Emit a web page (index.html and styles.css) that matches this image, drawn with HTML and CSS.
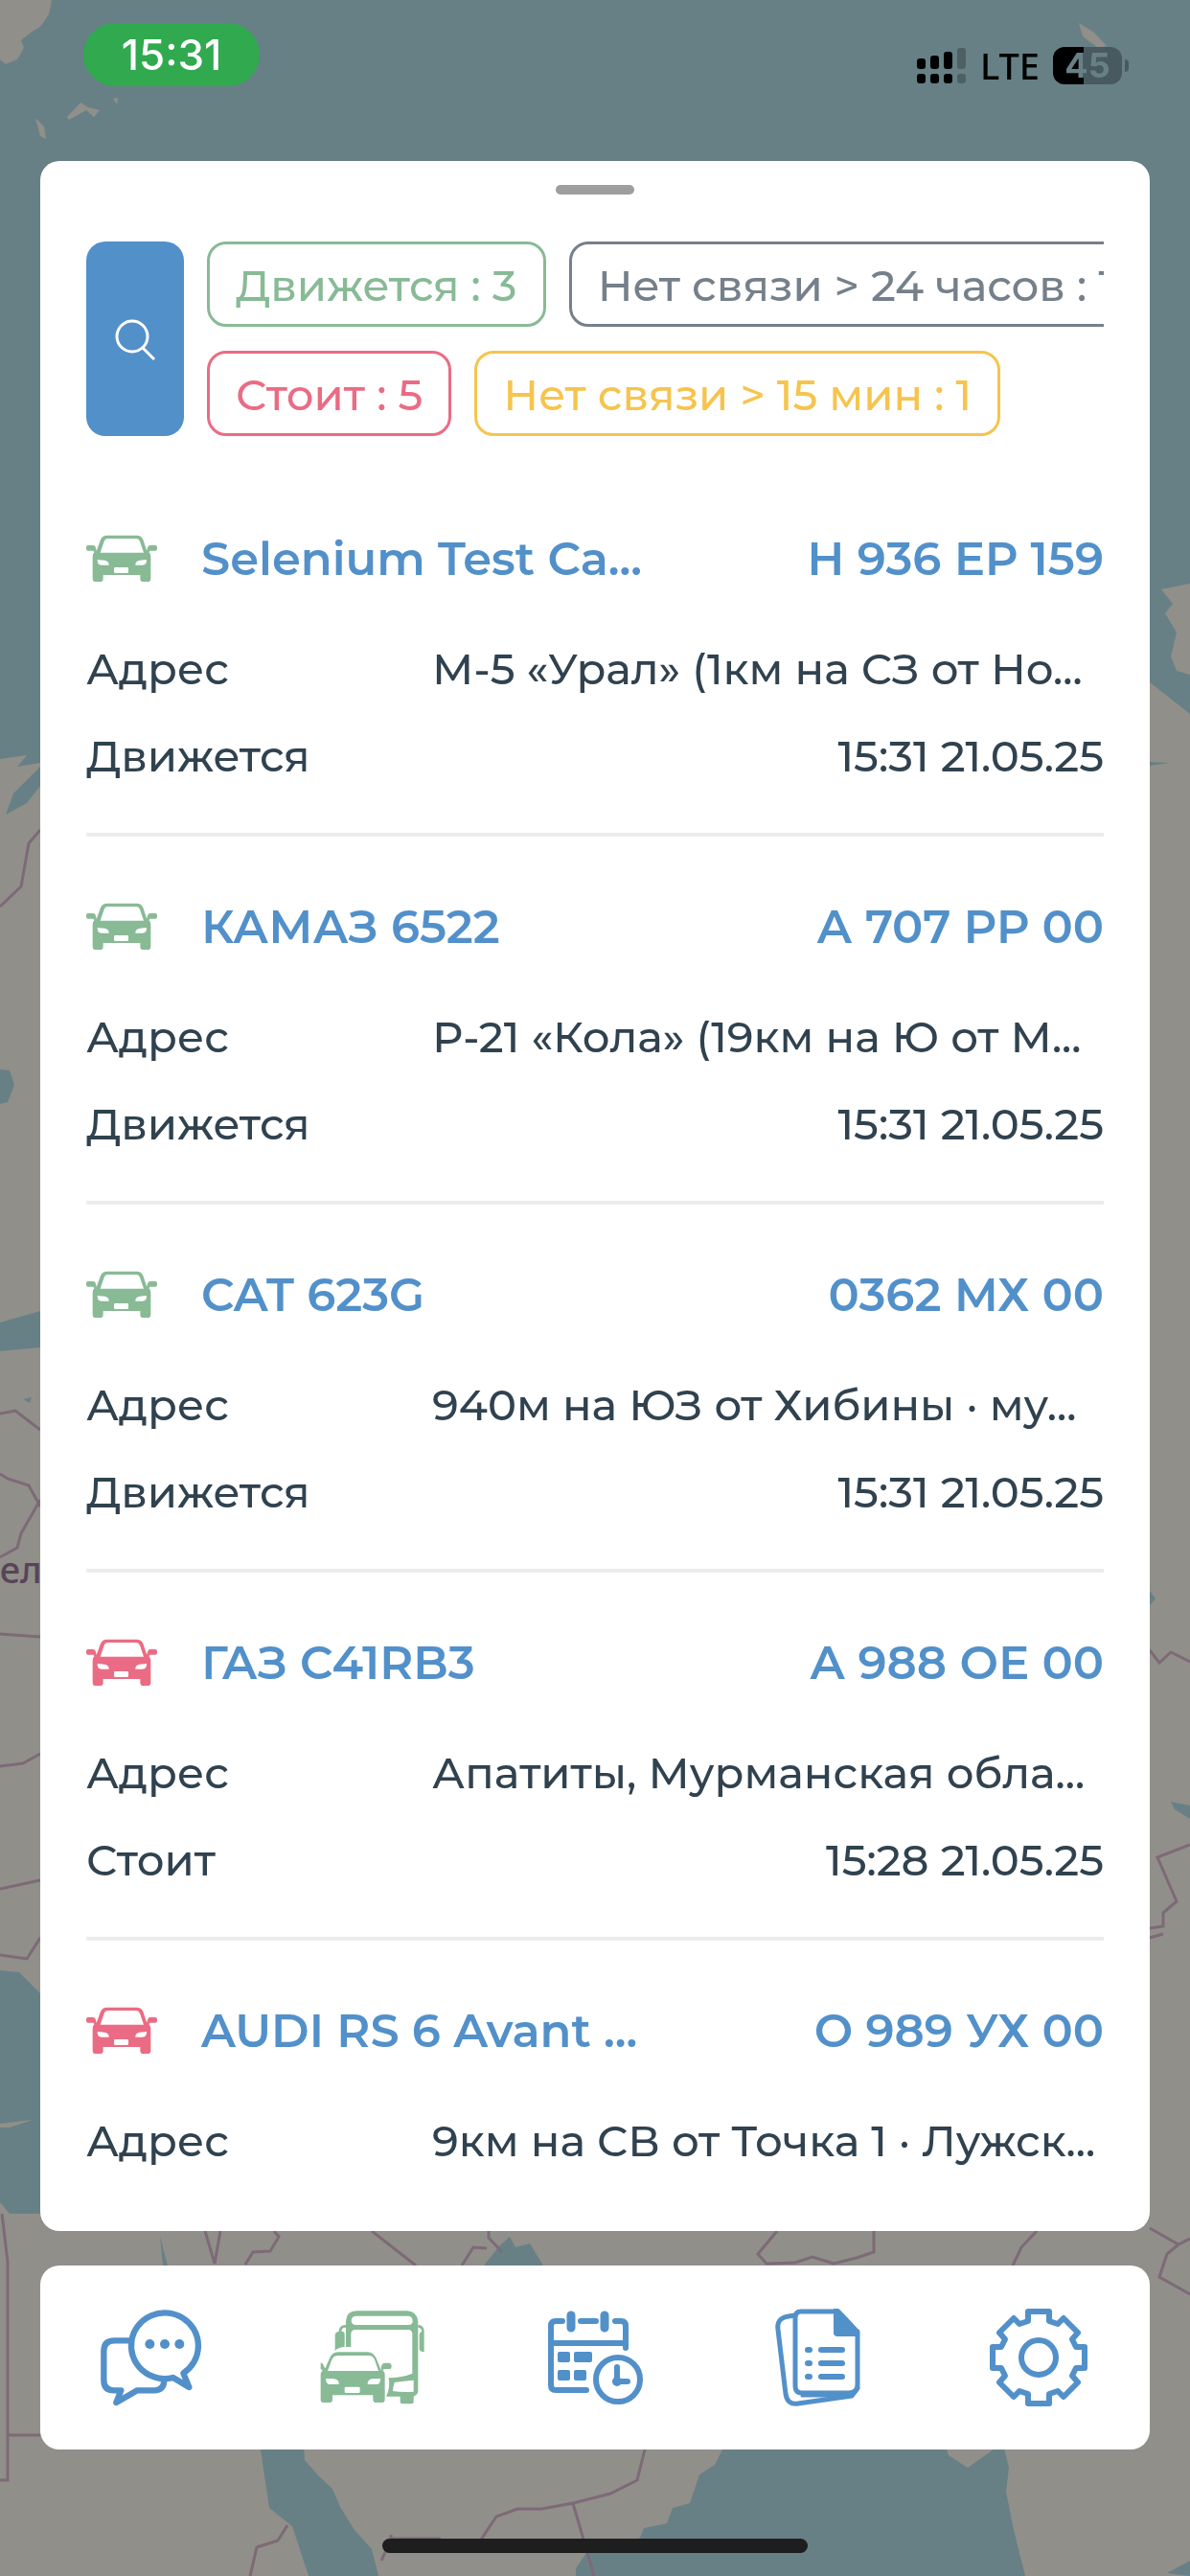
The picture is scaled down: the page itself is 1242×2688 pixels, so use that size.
FILE: index.html
```
<!DOCTYPE html>
<html lang="ru">
<head>
  <meta charset="UTF-8" />
  <meta name="viewport" content="width=device-width, initial-scale=1" />
  <title>Объекты</title>
  <link rel="stylesheet" href="styles.css">
</head>
<body>
  <!-- map under the sheet -->
  <svg class="map" viewBox="0 0 1242 2688" preserveAspectRatio="xMidYMid slice" aria-hidden="true">
    <rect width="1242" height="2688" fill="#678086"/>
    <g fill="#918f8a">
      <path d="M0 0H54L51 15L42 28L32 34L22 42L25 50L18 62L6 67L0 62Z"/>
      <path d="M70 122L84 107L92 112L104 115L98 122L90 115L72 125ZM37 123L46 132L48 145L42 142ZM118 103L123 102L122 109Z"/>
      <path d="M1126 24L1142 34L1155 48L1146 50L1130 38Z"/>
      <path d="M0 792L28 788L18 800L42 796V2080L20 2058L0 2056ZM0 2216L34 2212L10 2220L0 2220ZM0 2298L10 2310L42 2310L1200 2300V712L1242 745V2688H0Z"/>
      <path d="M1212 615L1242 609V704L1228 700L1222 685L1228 660L1216 640L1224 630Z"/>
    </g>
    <g fill="#678086">
      <path d="M6 850L14 828L42 800V820L28 838ZM0 1116L10 1117L15 1132L8 1150L0 1152ZM0 1380L42 1368V1406L0 1410ZM24 1460L33 1458L31 1464Z"/>
      <path d="M505 2364L520 2345L532 2334L538 2345L553 2341L567 2364ZM167 2334L175 2364L170 2364Z"/>
      <path d="M271 2550H317L318 2567L332 2583L347 2597L355 2616L370 2640L388 2660L395 2688H322L305 2636L281 2617Z"/>
      <path d="M757 2550L746 2572L730 2582L724 2600L720 2612L702 2617L696 2633L672 2638L668 2648L640 2662L612 2664L601 2680V2688H1070L1058 2640L1050 2600L1053 2575L1047 2550L1038 2555L1010 2575L990 2562L986 2550Z"/>
      <path d="M1200 795L1220 796L1200 799ZM1212 1193L1232 1193ZM1204 1572L1213 1570ZM1200 1660L1206 1668L1200 1675ZM1222 1880L1242 1884V1898L1226 1888ZM1218 2685L1242 2672V2688Z"/>
    </g>
    <g fill="none" stroke="#7d6a77" stroke-width="3">
      <path d="M0 946L22 925L30 880L42 866M0 1475L16 1472L42 1492M0 1538L8 1543L30 1550L42 1572M42 1565L22 1600L18 1615L0 1625M0 1705L42 1708M0 1843L24 1840L42 1830M0 1971L42 1962M0 2040L28 2044L42 2022M2 2310L8 2360L8 2588H0M8 2541H42"/>
      <path d="M214 2328L224 2362L230 2328M286 2328L291 2334L282 2349L264 2350L256 2363M388 2328L434 2364M510 2328V2335L524 2350M482 2364L494 2345L508 2346M811 2328L791 2352L800 2362L830 2361L848 2355L870 2362L894 2356L912 2350V2328M1082 2328L1066 2345L1057 2364"/>
      <path d="M673 2556L665 2588L637 2602L598 2612L565 2618L540 2618L518 2626L502 2650M598 2612L620 2688M300 2635L290 2651L268 2658L261 2688M408 2645V2649H460M408 2650L398 2672"/>
      <path d="M1200 1722L1210 1735L1222 1724L1242 1734M1242 1925L1208 1938L1228 1984L1214 1996V2010L1200 2012M1200 2022L1214 2018M1200 2325L1230 2342L1242 2336M1230 2342L1218 2352L1210 2376L1242 2394"/>
    </g>
    <text class="map-label" x="-24" y="1652">Бел</text>
  </svg>

  <div class="app">
    <header class="status-bar">
      <time class="clock">15:31</time>
      <div class="status-icons">
        <svg class="signal" viewBox="0 0 52 38" aria-hidden="true">
          <rect x="0" y="12" width="9" height="11" rx="3"/>
          <rect x="14" y="9" width="9" height="14" rx="3"/>
          <rect x="28" y="5" width="9" height="18" rx="3"/>
          <rect x="42" y="1" width="9" height="22" rx="3" opacity=".25"/>
          <rect x="0" y="28" width="9" height="10" rx="3"/>
          <rect x="14" y="28" width="9" height="10" rx="3"/>
          <rect x="28" y="28" width="9" height="10" rx="3"/>
          <rect x="42" y="28" width="9" height="10" rx="3" opacity=".25"/>
        </svg>
        <span class="network">LTE</span>
        <span class="battery">45</span>
      </div>
    </header>

    <main class="sheet">
      <div class="handle"></div>

      <div class="filters">
        <button class="search" type="button" aria-label="Поиск">
          <svg viewBox="0 0 46 46" aria-hidden="true"><circle cx="20" cy="20" r="16"/><path d="M31 32L43 44"/></svg>
        </button>
        <div class="chips">
          <div class="chip-row">
            <button class="chip green" type="button">Движется : 3</button>
            <button class="chip gray" type="button">Нет связи &gt; 24 часов : 1</button>
          </div>
          <div class="chip-row">
            <button class="chip red" type="button">Стоит : 5</button>
            <button class="chip yellow" type="button">Нет связи &gt; 15 мин : 1</button>
          </div>
        </div>
      </div>

      <svg class="sprite" aria-hidden="true">
        <symbol id="car" viewBox="30 57 222 150">
          <path fill="currentColor" fill-rule="evenodd" d="M62 108L75 72Q80 59 96 59H187Q203 59 208 72L220 108Q232 113 232 125V194Q232 204 222 204H209Q199 204 199 194V183H83V194Q83 204 73 204H60Q50 204 50 194V125Q50 113 62 108ZM74 113H210L198 78Q195 69 186 69H98Q89 69 86 78ZM65 135Q64 152 78 152H101Q102 140 88 137ZM219 135Q220 152 206 152H184Q183 140 197 137ZM121 159Q117 159 117 163V173Q117 177 121 177H158Q162 177 162 173V163Q162 159 158 159Z"/>
          <path fill="currentColor" d="M36 90H52Q59 90 60 98L63 111L56 114L53 107H36Q30 107 30 101V96Q30 90 36 90ZM246 90H230Q223 90 222 98L218 111L225 114L229 107H246Q252 107 252 101V96Q252 90 246 90Z"/>
        </symbol>
      </svg>

      <ul class="vehicles">
        <li class="vehicle">
          <div class="vehicle-head">
            <svg class="car moving"><use href="#car"/></svg>
            <a class="name" href="#">Selenium Test Ca...</a>
            <span class="plate">Н 936 ЕР 159</span>
          </div>
          <dl>
            <dt>Адрес</dt><dd>М-5 «Урал» (1км на СЗ от Но...</dd>
            <dt>Движется</dt><dd class="time">15:31 21.05.25</dd>
          </dl>
        </li>
        <li class="vehicle">
          <div class="vehicle-head">
            <svg class="car moving"><use href="#car"/></svg>
            <a class="name" href="#">КАМАЗ 6522</a>
            <span class="plate">А 707 РР 00</span>
          </div>
          <dl>
            <dt>Адрес</dt><dd>Р-21 «Кола» (19км на Ю от М...</dd>
            <dt>Движется</dt><dd class="time">15:31 21.05.25</dd>
          </dl>
        </li>
        <li class="vehicle">
          <div class="vehicle-head">
            <svg class="car moving"><use href="#car"/></svg>
            <a class="name" href="#">CAT 623G</a>
            <span class="plate">0362 МХ 00</span>
          </div>
          <dl>
            <dt>Адрес</dt><dd>940м на ЮЗ от Хибины · му...</dd>
            <dt>Движется</dt><dd class="time">15:31 21.05.25</dd>
          </dl>
        </li>
        <li class="vehicle">
          <div class="vehicle-head">
            <svg class="car stopped"><use href="#car"/></svg>
            <a class="name" href="#">ГАЗ C41RB3</a>
            <span class="plate">А 988 ОЕ 00</span>
          </div>
          <dl>
            <dt>Адрес</dt><dd>Апатиты, Мурманская обла...</dd>
            <dt>Стоит</dt><dd class="time">15:28 21.05.25</dd>
          </dl>
        </li>
        <li class="vehicle">
          <div class="vehicle-head">
            <svg class="car stopped"><use href="#car"/></svg>
            <a class="name" href="#">AUDI RS 6 Avant ...</a>
            <span class="plate">О 989 УХ 00</span>
          </div>
          <dl>
            <dt>Адрес</dt><dd>9км на СВ от Точка 1 · Лужск...</dd>
          </dl>
        </li>
      </ul>
    </main>

    <nav class="tabs">
      <a class="tab" href="#" aria-label="Сообщения">
        <svg viewBox="98 75 330 330" fill="none" stroke="currentColor" stroke-width="19" stroke-linejoin="round" stroke-linecap="round">
          <path d="M200 187H147Q114 187 114 220V311Q114 343 147 343H168L153 381L219 343H272Q302 343 303 312" stroke-linecap="butt"/>
          <path d="M331 303A105 103 0 1 1 363 289L381 333Z"/>
          <g fill="currentColor" stroke="none"><circle cx="258" cy="198" r="15"/><circle cx="305" cy="198" r="15"/><circle cx="351" cy="198" r="15"/></g>
        </svg>
      </a>
      <a class="tab active" href="#" aria-label="Объекты" aria-current="page">
        <svg viewBox="793 75 330 330">
          <path fill="currentColor" fill-rule="evenodd" d="M874 207V126Q876 94 908 94H1066Q1098 96 1100 128V346Q1099 357 1086 362V379Q1086 385 1080 385H1050Q1044 385 1044 379V362H1000Q1014 336 1008 304Q1050 303 1082 290V165Q1080 153 1069 153H903Q891 154 890 165V207ZM904 138H1071Q1083 137 1083 125Q1082 110 1068 110H905Q891 111 891 125Q892 137 904 138ZM1026 318Q1022 330 1021 345Q1050 350 1086 347V311Q1055 313 1026 318Z"/>
          <path fill="currentColor" d="M852 158Q853 137 874 138V146Q861 145 860 158Q870 158 870 166V207Q850 208 840 219V170Q841 160 852 158ZM1100 138Q1117 138 1119 155V222Q1104 222 1104 212V168Q1105 160 1112 158Q1111 147 1100 146Z"/>
          <path fill="currentColor" fill-rule="evenodd" d="M807 280L823 242Q832 223 850 223H942Q960 224 969 242L984 280Q996 282 996 293V371Q996 381 986 381H969Q959 381 959 371V358H832V371Q832 381 822 381H805Q795 381 795 371V293Q795 283 807 280ZM817 282H976L964 247Q959 234 944 234H850Q835 234 830 247ZM811 306Q812 324 824 324H852Q854 311 838 307ZM982 306Q982 324 970 324H942Q941 311 955 307ZM874 332Q870 332 870 336V347Q870 351 874 351H914Q918 351 918 347V336Q918 332 914 332Z"/>
          <path fill="currentColor" d="M984 277Q984 258 996 257H1010Q1017 258 1017 266Q1017 276 1010 276H992L990 285ZM795 256Q804 259 806 269L812 276L805 285L795 275Z"/>
        </svg>
      </a>
      <a class="tab" href="#" aria-label="Календарь">
        <svg viewBox="0 0 110 110" fill="none" stroke="currentColor" stroke-width="6" stroke-linecap="round">
          <path d="M21 17H14Q9 17 9 22V84Q9 89 14 89H46M76 17H82Q87 17 87 22V45M40 17H56M9 40H87"/>
          <path d="M30 11V24M65 11V24" stroke-width="9"/>
          <g fill="currentColor" stroke="none"><rect x="16" y="49" width="13" height="11" rx="2"/><rect x="33" y="49" width="19" height="11" rx="2"/><rect x="16" y="68" width="13" height="11" rx="2"/><rect x="33" y="68" width="13" height="11" rx="2"/></g>
          <circle cx="79" cy="78" r="28" fill="#fff" stroke="none"/>
          <circle cx="79" cy="78" r="23"/>
          <path d="M78 65V80H89"/><circle cx="78" cy="80" r="2"/>
        </svg>
      </a>
      <a class="tab" href="#" aria-label="Отчёты">
        <svg viewBox="0 0 110 110" fill="none" stroke="currentColor" stroke-width="5" stroke-linejoin="round" stroke-linecap="round">
          <path d="M32 11L25 12Q12 14 14 26L22 93Q24 105 35 103L91 95L97 87"/>
          <path d="M75 7H38Q32 7 32 13V85Q32 92 39 92H88Q97 92 97 83V28"/>
          <path d="M39 95H90" stroke-width="3"/>
          <path fill="currentColor" stroke="none" d="M72 4H77Q79 5 99 27V33H76Q72 33 72 29Z"/>
          <path d="M45 47H47M45 61H47M45 75H47M59 47H81M59 61H81M59 75H81" stroke-width="6"/>
        </svg>
      </a>
      <a class="tab" href="#" aria-label="Настройки">
        <svg viewBox="0 0 110 110" fill="none" stroke="currentColor" stroke-width="6" stroke-linejoin="round">
          <path d="M44 7H66V17L75 20L81 14L96 29L90 36L94 44H103V66H94L90 74L96 81L81 96L75 90L66 93V103H44V93L35 90L29 96L14 81L20 74L16 66H7V44H16L20 36L14 29L29 14L35 20L44 17Z"/>
          <circle cx="55" cy="55" r="18"/>
        </svg>
      </a>
    </nav>

    <div class="home-indicator"></div>
  </div>
</body>
</html>
```
FILE: styles.css
```
* {
  box-sizing: border-box;
}

body {
  margin: 0;
  font-family: Montserrat, Inter, "Noto Sans", sans-serif;
  background-color: #918f8a;
  color: #30424f;
}

.map {
  position: fixed;
  top: 0;
  left: 0;
  width: 100%;
  height: 100%;
}

.map-label {
  font: 500 38px "Noto Sans", sans-serif;
  fill: #574557;
}

.app {
  position: relative;
  display: flex;
  flex-direction: column;
  height: 100vh;
  padding: 0 42px 24px;
}

/* status bar */
.status-bar {
  display: flex;
  justify-content: space-between;
  flex: none;
  height: 168px;
  padding: 24px 24px 0 45px;
}

.clock {
  width: 184px;
  height: 66px;
  border-radius: 33px;
  background-color: #30a94f;
  color: #fff;
  font: 500 44px/66px Inter, sans-serif;
  text-align: center;
}

.status-icons {
  display: flex;
  align-items: center;
  gap: 14px;
  height: 88px;
  color: #000;
}

.signal {
  width: 52px;
  height: 38px;
}

.network {
  font: 500 38px/40px "Noto Sans", sans-serif;
}

.battery {
  position: relative;
  width: 72px;
  height: 39px;
  margin-right: 5px;
  border-radius: 12px;
  background: linear-gradient(to right, #000 44%, #485a5f 44%);
  color: #678086;
  font: 700 36px/39px Inter, sans-serif;
  text-align: center;
}

.battery::after {
  content: "";
  position: absolute;
  top: 13px;
  right: -7px;
  width: 4px;
  height: 13px;
  border-radius: 0 4px 4px 0;
  background-color: #485a5f;
}

/* sheet */
.sheet {
  flex: 1;
  min-height: 0;
  overflow: hidden;
  padding: 25px 48px 0;
  border-radius: 20px;
  background-color: #fff;
}

.handle {
  width: 82px;
  height: 10px;
  margin: 0 auto 49px;
  border-radius: 5px;
  background-color: #9e9e9e;
}

.filters {
  display: flex;
  gap: 24px;
}

.search {
  flex: none;
  width: 102px;
  padding: 0;
  border: none;
  border-radius: 20px;
  background-color: #5290ca;
  cursor: pointer;
}

.search svg {
  display: block;
  width: 46px;
  height: 46px;
  margin: 0 auto;
  fill: none;
  stroke: #fff;
  stroke-width: 3;
}

.chips {
  flex: 1;
  min-width: 0;
  overflow: hidden;
}

.chip-row {
  display: flex;
  gap: 24px;
}

.chip-row + .chip-row {
  margin-top: 25px;
}

.chip {
  flex: none;
  height: 89px;
  padding: 2px 27px 0;
  border: 3px solid currentColor;
  border-radius: 20px;
  background-color: #fff;
  font: inherit;
  font-size: 45px;
  font-weight: 500;
  white-space: nowrap;
  cursor: pointer;
}

.green {
  color: #88ba96;
}

.gray {
  color: #75808b;
}

.red {
  color: #ea6c84;
}

.yellow {
  color: #f6c44e;
}

/* vehicle list */
.sprite {
  display: none;
}

.vehicles {
  margin: 34px 0 0;
  padding: 0;
  list-style: none;
}

.vehicle {
  height: 384px;
  padding-top: 62px;
  border-bottom: 4px solid #ececec;
}

.vehicle:last-child {
  border-bottom: none;
}

.vehicle-head {
  display: flex;
  align-items: center;
  height: 64px;
  color: #5290ca;
  font-size: 48px;
  font-weight: 600;
  white-space: nowrap;
}

.car {
  width: 74px;
  height: 50px;
  margin-right: 46px;
}

.moving {
  color: #88ba96;
}

.stopped {
  color: #ea6c84;
}

.name {
  flex: 1;
  color: inherit;
  text-decoration: none;
}

dl {
  display: grid;
  grid-template-columns: 34% 66%;
  row-gap: 27px;
  margin: 51px 0 0;
  font-size: 45px;
  font-weight: 500;
  line-height: 64px;
  white-space: nowrap;
}

dd {
  margin: 0;
}

.time {
  text-align: right;
}

/* bottom tabs */
.tabs {
  display: flex;
  flex: none;
  height: 192px;
  margin: 36px 0 93px;
  border-radius: 20px;
  background-color: #fff;
}

.tab {
  display: flex;
  flex: 1;
  align-items: center;
  justify-content: center;
  color: #5290ca;
}

.tab.active {
  color: #88ba96;
}

.tab svg {
  width: 110px;
  height: 110px;
}

.home-indicator {
  flex: none;
  align-self: center;
  width: 444px;
  height: 15px;
  border-radius: 8px;
  background-color: #1e1e1e;
}
```
